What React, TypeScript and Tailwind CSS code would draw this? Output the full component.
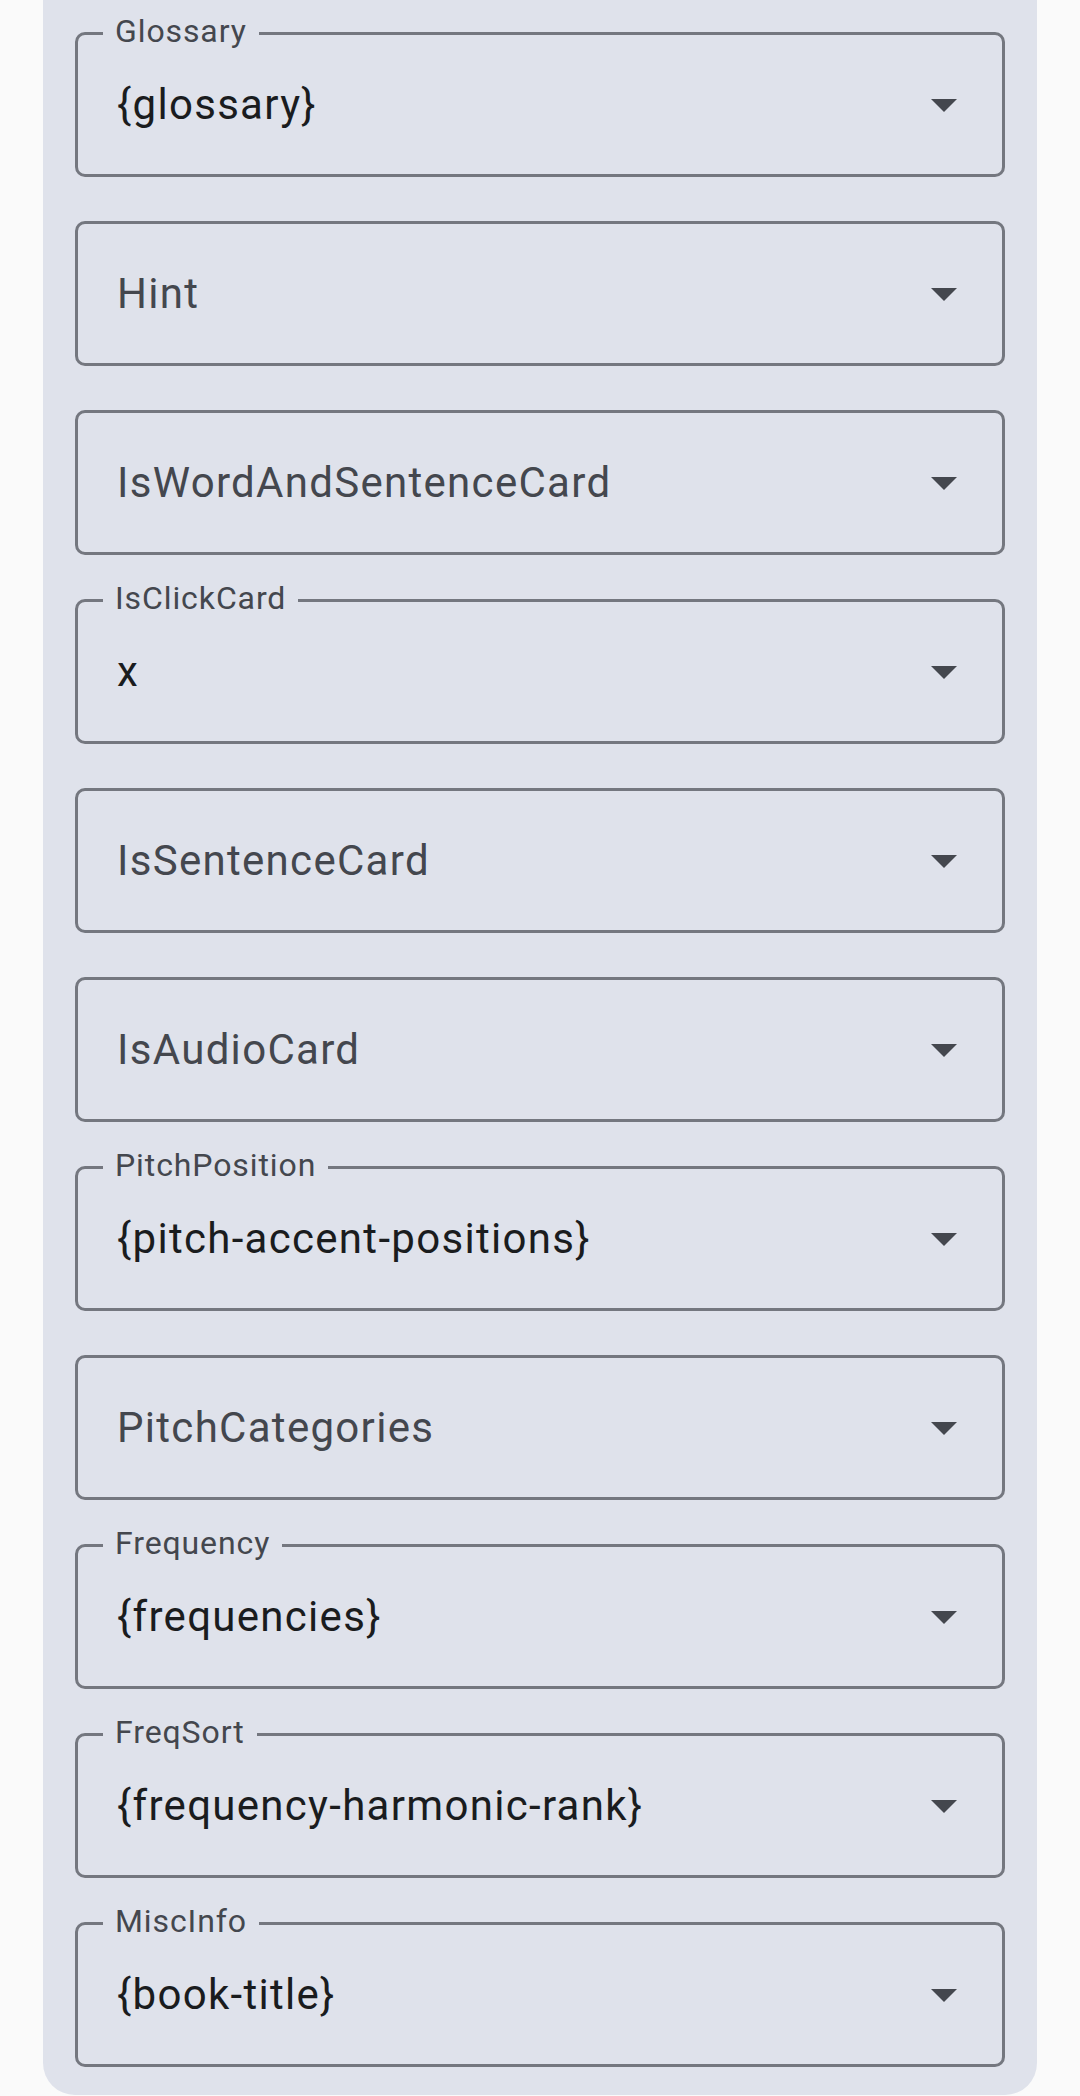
import React from "react";

type Field = { label?: string; value?: string; placeholder?: string };

const fields: Field[] = [
  { label: "Glossary", value: "{glossary}" },
  { placeholder: "Hint" },
  { placeholder: "IsWordAndSentenceCard" },
  { label: "IsClickCard", value: "x" },
  { placeholder: "IsSentenceCard" },
  { placeholder: "IsAudioCard" },
  { label: "PitchPosition", value: "{pitch-accent-positions}" },
  { placeholder: "PitchCategories" },
  { label: "Frequency", value: "{frequencies}" },
  { label: "FreqSort", value: "{frequency-harmonic-rank}" },
  { label: "MiscInfo", value: "{book-title}" },
];

function Arrow() {
  return (
    <svg width="26" height="13" viewBox="0 0 10 5" className="shrink-0">
      <path d="M0 0 L5 5 L10 0 Z" fill="#44474e" />
    </svg>
  );
}

function SelectField({ f }: { f: Field }) {
  return (
    <div className="relative h-[145px] w-full shrink-0 rounded-[10px] border-[3px] border-[#74777f] flex items-center justify-between pl-[39px] pr-[45px] pt-[1px]">
      {f.label && (
        <div className="absolute left-[25px] top-[-4px] -translate-y-1/2 bg-[#dfe2eb] px-[12px] text-[32px] leading-none tracking-[0.9px] text-[#44474e]">
          {f.label}
        </div>
      )}
      {f.value ? (
        <span className="text-[42px] leading-none tracking-[1.3px] text-[#1a1c1e]">{f.value}</span>
      ) : (
        <span className="text-[42px] leading-none tracking-[1.3px] text-[#44474e]">{f.placeholder}</span>
      )}
      <Arrow />
    </div>
  );
}

export default function App() {
  return (
    <div
      className="w-[1080px] h-[2096px] overflow-hidden bg-[#fafafa]"
      style={{ fontFamily: "Roboto, 'Noto Sans', sans-serif" }}
    >
      <div className="mx-[43px] bg-[#dfe2eb] rounded-b-[32px] px-[32px] pt-[32px] pb-[28px] flex flex-col gap-[44px]">
        {fields.map((f, i) => (
          <SelectField key={i} f={f} />
        ))}
      </div>
    </div>
  );
}
